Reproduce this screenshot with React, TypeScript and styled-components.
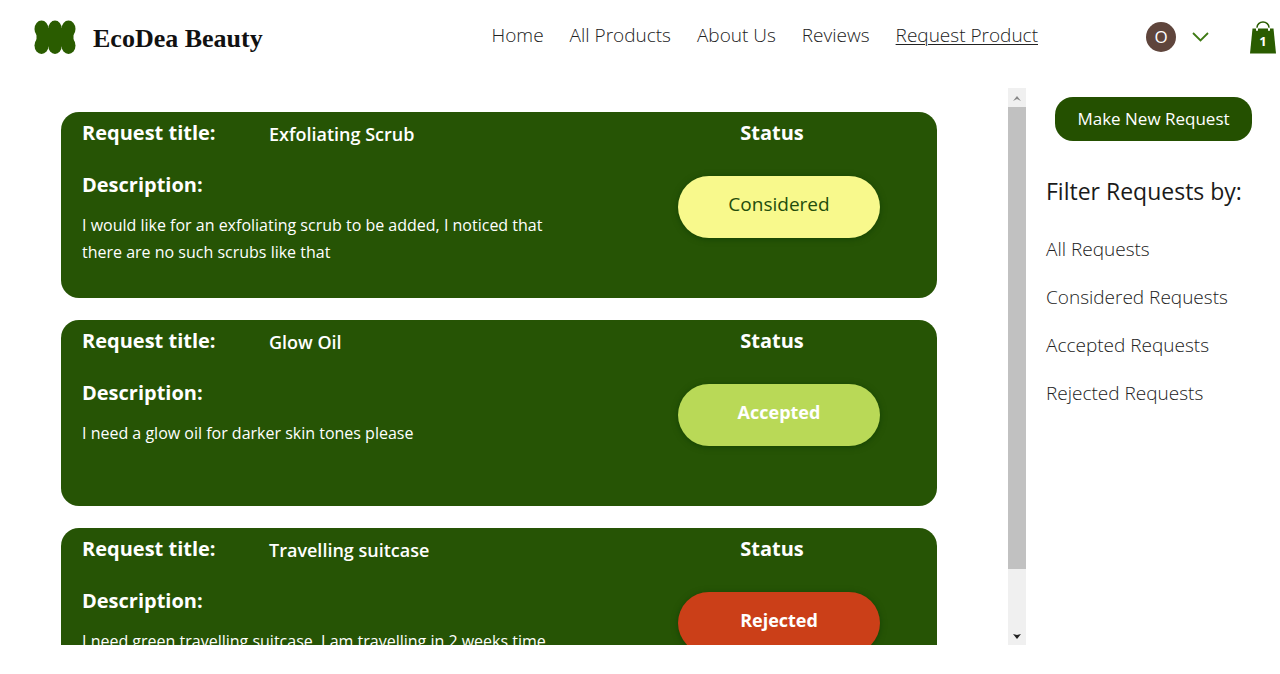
import React from "react";
import styled, { createGlobalStyle } from "styled-components";

const GREEN = "#265405";
const DEEP_GREEN = "#245000";

const GlobalStyle = createGlobalStyle`
  * { box-sizing: border-box; }
  body { margin: 0; background: #fff; color: #1a1a1a; font-family: "Open Sans", "Noto Sans", sans-serif; }
  h1, h2, h3, p, ul { margin: 0; padding: 0; }
  button { font: inherit; border: 0; cursor: pointer; }
`;

const Header = styled.header`
  display: flex;
  align-items: center;
  height: 74px;
  padding: 0 4px 0 34px;
`;

const Brand = styled.a`
  display: flex;
  align-items: center;
  gap: 17px;
  color: #111;
  text-decoration: none;
  font: bold 26px/40px "Liberation Serif", serif;
`;

const BrandName = styled.span`
  padding-top: 3px;
`;

const Nav = styled.nav`
  display: flex;
  gap: 26px;
  margin-left: auto;
  padding-bottom: 4px;
`;

const NavLink = styled.a<{ $current?: boolean }>`
  color: #222;
  font-size: 19px;
  font-weight: 300;
  line-height: 28px;
  text-decoration: ${(p) => (p.$current ? "underline" : "none")};
  text-decoration-thickness: 1px;
  text-underline-offset: 2px;
  white-space: nowrap;
`;

const Account = styled.button`
  display: flex;
  align-items: center;
  gap: 16px;
  margin-left: 108px;
  padding: 0;
  background: none;
`;

const Avatar = styled.span`
  width: 30px;
  border-radius: 50%;
  background: #5f453c;
  color: #fff;
  font-size: 17px;
  line-height: 30px;
  text-align: center;
`;

const Cart = styled.button`
  margin-left: 41px;
  padding: 0;
  background: none;
  line-height: 0;
`;

const Main = styled.main`
  display: flex;
  gap: 20px;
  padding: 14px 28px 0 61px;
`;

const Panel = styled.section`
  display: flex;
  flex: 1;
  gap: 71px;
  height: calc(100vh - 117px);
`;

const Cards = styled.div`
  display: flex;
  flex: 1;
  flex-direction: column;
  gap: 22px;
  padding: 24px 0;
  overflow-y: auto;
  scrollbar-width: none;
`;

const Card = styled.article`
  display: flex;
  flex-shrink: 0;
  justify-content: space-between;
  min-height: 186px;
  padding: 6px 57px 16px 21px;
  border-radius: 18px;
  background: ${GREEN};
  color: #fff;
`;

const Details = styled.div`
  width: 480px;
`;

const TitleRow = styled.div`
  display: grid;
  grid-template-columns: 187px 1fr;
`;

const Label = styled.h3`
  font: bold 20px/30px "Open Sans", sans-serif;
`;

const Title = styled.h2`
  font: 600 18px/32px "Open Sans", sans-serif;
`;

const Description = styled.p`
  margin-top: 12px;
  font-size: 16px;
  line-height: 27px;
`;

const DescriptionLabel = styled(Label)`
  margin-top: 20px;
`;

const StatusColumn = styled.div`
  display: flex;
  flex-direction: column;
  gap: 28px;
  width: 202px;
`;

const StatusLabel = styled(Label)`
  padding-right: 14px;
  text-align: center;
`;

type Status = "Considered" | "Accepted" | "Rejected";

const pillColors: Record<Status, string> = {
  Considered: "#f8f98c",
  Accepted: "#b9d957",
  Rejected: "#cb3f18",
};

const Pill = styled.span<{ $status: Status }>`
  padding: 12px 0 18px;
  border-radius: 31px;
  background: ${(p) => pillColors[p.$status]};
  color: ${(p) => (p.$status === "Considered" ? "#234d0b" : "#fff")};
  box-shadow: 0 1px 6px rgba(0, 50, 0, 0.5);
  font-size: ${(p) => (p.$status === "Considered" ? 19 : 18)}px;
  font-weight: ${(p) => (p.$status === "Considered" ? 400 : 700)};
  line-height: 32px;
  text-align: center;
`;

const Scrollbar = styled.div`
  display: flex;
  flex-direction: column;
  width: 18px;
  background: #f0f0f0;
`;

const ScrollArrow = styled.button`
  height: 19px;
  padding: 0;
  background: none;
  line-height: 0;
`;

const ScrollTrack = styled.div`
  flex: 1;
`;

const ScrollThumb = styled.div`
  height: 89%;
  background: #c1c1c1;
`;

const Sidebar = styled.aside`
  width: 206px;
  padding-top: 9px;
`;

const NewRequest = styled.button`
  display: block;
  width: 197px;
  margin-left: 9px;
  padding: 8px 0;
  border-radius: 18px;
  background: ${DEEP_GREEN};
  color: #fff;
  font-size: 17px;
  font-weight: 500;
  line-height: 28px;
`;

const FilterHeading = styled.h2`
  margin-top: 34px;
  font-size: 23px;
  font-weight: 400;
  line-height: 32px;
  white-space: nowrap;
`;

const Filters = styled.ul`
  display: flex;
  flex-direction: column;
  gap: 20px;
  margin-top: 28px;
  list-style: none;
`;

const FilterLink = styled.a`
  display: block;
  color: #222;
  font-size: 19px;
  font-weight: 300;
  line-height: 28px;
  text-decoration: none;
  white-space: nowrap;
`;

const requests: { title: string; text: string; status: Status }[] = [
  {
    title: "Exfoliating Scrub",
    text: "I would like for an exfoliating scrub to be added, I noticed that there are no such scrubs like that",
    status: "Considered",
  },
  { title: "Glow Oil", text: "I need a glow oil for darker skin tones please", status: "Accepted" },
  { title: "Travelling suitcase", text: "I need green travelling suitcase, I am travelling in 2 weeks time", status: "Rejected" },
];

const pages = ["Home", "All Products", "About Us", "Reviews", "Request Product"];
const filters = ["All Requests", "Considered Requests", "Accepted Requests", "Rejected Requests"];

const Logo = () => (
  <svg width="42" height="35" viewBox="0 0 42 35" fill="#2a5c00" aria-hidden="true">
    <ellipse cx="7.500" cy="9" rx="7" ry="8.500" />
    <ellipse cx="21" cy="9" rx="6.800" ry="8.500" />
    <ellipse cx="34.500" cy="9" rx="7" ry="8.500" />
    <ellipse cx="7.500" cy="25.500" rx="7" ry="8.500" />
    <ellipse cx="21" cy="25.500" rx="6.800" ry="8.500" />
    <ellipse cx="34.500" cy="25.500" rx="7" ry="8.500" />
    <rect x="2.500" y="8" width="37" height="18.500" />
  </svg>
);

const Chevron = () => (
  <svg width="17" height="10" viewBox="0 0 17 10" fill="none" stroke="#3f7a14" strokeWidth="1.8" aria-hidden="true">
    <path d="M1 1l7.500 7.500L16 1" />
  </svg>
);

const Bag = () => (
  <svg width="26" height="33" viewBox="0 0 26 33" aria-hidden="true">
    <path d="M2.500 7.500h21L26 32.500H0z" fill="#2a5c00" />
    <path d="M7 9V6.500a6 5.500 0 0 1 12 0V9" fill="none" stroke="#2a5c00" strokeWidth="1.500" />
    <path d="M7 7.500v1.500M19 7.500v1.500" stroke="#fff" strokeWidth="2" strokeLinecap="round" />
    <text x="13" y="25" fill="#fff" fontSize="13" fontWeight="700" textAnchor="middle" fontFamily="Open Sans, sans-serif">1</text>
  </svg>
);

export default function App() {
  return (
    <>
      <GlobalStyle />
      <Header>
        <Brand href="#home"><Logo /><BrandName>EcoDea Beauty</BrandName></Brand>
        <Nav>
          {pages.map((page) => (
            <NavLink key={page} href="#page" $current={page === "Request Product"}>{page}</NavLink>
          ))}
        </Nav>
        <Account aria-label="Account menu"><Avatar>O</Avatar><Chevron /></Account>
        <Cart aria-label="Cart"><Bag /></Cart>
      </Header>
      <Main>
        <Panel>
          <Cards>
            {requests.map((request) => (
              <Card key={request.title}>
                <Details>
                  <TitleRow>
                    <Label>Request title:</Label>
                    <Title>{request.title}</Title>
                  </TitleRow>
                  <DescriptionLabel>Description:</DescriptionLabel>
                  <Description>{request.text}</Description>
                </Details>
                <StatusColumn>
                  <StatusLabel>Status</StatusLabel>
                  <Pill $status={request.status}>{request.status}</Pill>
                </StatusColumn>
              </Card>
            ))}
          </Cards>
          <Scrollbar>
            <ScrollArrow aria-label="Scroll up">
              <svg width="8" height="5" viewBox="0 0 8 5"><path d="M0 5l4-5 4 5-4-2z" fill="#888" /></svg>
            </ScrollArrow>
            <ScrollTrack><ScrollThumb /></ScrollTrack>
            <ScrollArrow aria-label="Scroll down">
              <svg width="8" height="5" viewBox="0 0 8 5"><path d="M0 0l4 1 4-1-4 5z" fill="#222" /></svg>
            </ScrollArrow>
          </Scrollbar>
        </Panel>
        <Sidebar>
          <NewRequest>Make New Request</NewRequest>
          <FilterHeading>Filter Requests by:</FilterHeading>
          <Filters>
            {filters.map((filter) => (
              <li key={filter}><FilterLink href="#filter">{filter}</FilterLink></li>
            ))}
          </Filters>
        </Sidebar>
      </Main>
    </>
  );
}
